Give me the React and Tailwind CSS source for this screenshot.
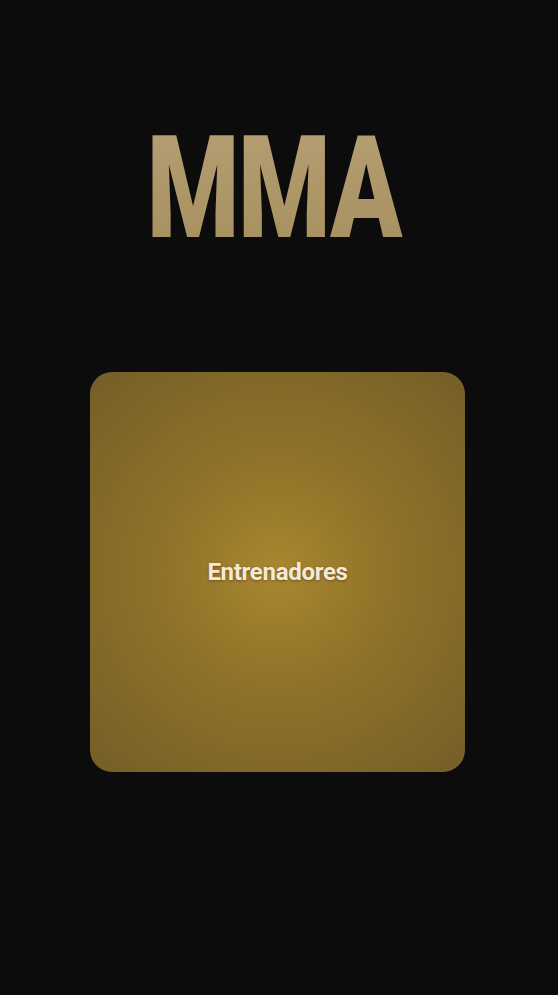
export default function App() {
  return (
    <div className="min-h-[995px] w-full bg-[#0c0c0c] flex flex-col" style={{ fontFamily: "Roboto, 'Noto Sans', sans-serif" }}>
      <div className="pt-[117px] flex justify-center">
        <h1
          className="text-[143px] leading-none font-black tracking-[-2px] scale-x-[0.74] origin-center bg-gradient-to-b from-[#b59f74] to-[#a68f5e] bg-clip-text text-transparent pr-[8px] ml-[-4px]"
          style={{ fontFamily: "Roboto, sans-serif" }}
        >
          MMA
        </h1>
      </div>
      <div className="mt-[112px] ml-[90px]">
        <div className="w-[375px] h-[400px] rounded-[22px] flex items-center justify-center bg-[radial-gradient(circle_at_50%_50%,#a8872f_0%,#8e7129_45%,#745e28_100%)]">
          <span className="text-[24px] font-bold text-[#f6e8d6] tracking-[-0.3px] [text-shadow:0_1px_3px_rgba(0,0,0,0.35)]">
            Entrenadores
          </span>
        </div>
      </div>
    </div>
  );
}
